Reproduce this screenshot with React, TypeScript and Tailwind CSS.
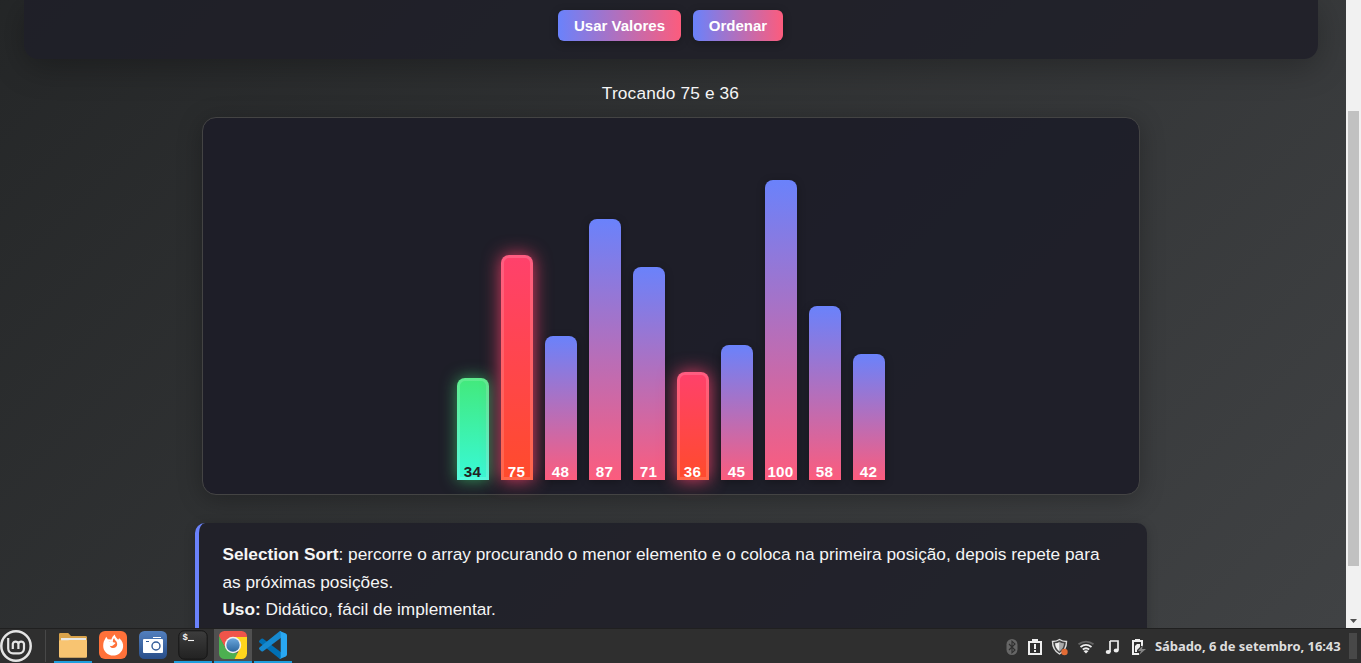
import React from "react";

type Kind = "normal" | "active" | "sorted";
const bars: { v: number; kind: Kind }[] = [
  { v: 34, kind: "sorted" },
  { v: 75, kind: "active" },
  { v: 48, kind: "normal" },
  { v: 87, kind: "normal" },
  { v: 71, kind: "normal" },
  { v: 36, kind: "active" },
  { v: 45, kind: "normal" },
  { v: 100, kind: "normal" },
  { v: 58, kind: "normal" },
  { v: 42, kind: "normal" },
];

const kinds: Record<Kind, string> = {
  normal: "bg-linear-to-b/srgb from-[#6a82fb] to-[#fc5c7d] text-white shadow-[0_2px_8px_rgba(0,0,0,0.3)]",
  active:
    "bg-linear-to-b/srgb from-[#ff416c] to-[#ff4b2b] text-white shadow-[0_0_18px_rgba(255,65,108,0.85),inset_0_0_0_3px_rgba(255,255,255,0.15)]",
  sorted:
    "bg-linear-to-b/srgb from-[#43e97b] to-[#38f9d7] text-[#222222] shadow-[0_0_16px_rgba(67,233,123,0.6),inset_0_0_0_3px_rgba(255,255,255,0.15)]",
};

function Bar({ v, kind }: { v: number; kind: Kind }) {
  return (
    <div
      className={`flex w-8 items-end justify-center rounded-t-lg pr-px text-[15.2px] leading-[16px] font-bold tracking-[0.3px] ${kinds[kind]}`}
      style={{ height: v * 3 }}
    >
      {v}
    </div>
  );
}

function GradientButton({ children, width }: { children: React.ReactNode; width: string }) {
  return (
    <button
      className={`h-[31px] rounded-md bg-linear-to-r/srgb from-[#6a82fb] to-[#fc5c7d] pl-px text-center text-[15.04px] leading-[31px] font-bold text-white shadow-[0_2px_8px_rgba(0,0,0,0.27)] ${width}`}
    >
      {children}
    </button>
  );
}

function MintLogo() {
  return (
    <svg width="32" height="32" viewBox="0 0 32 32" fill="none" stroke="#e4e4e4">
      <circle cx="16" cy="16" r="14.7" strokeWidth="2.5" />
      <path d="M8.2 8v10.500a4.800 4.800 0 0 0 4.800 4.800h6.200a4.800 4.800 0 0 0 4.800-4.800v-4.700a2.900 2.900 0 0 0-5.600 0V19m0-5.200a2.900 2.900 0 0 0-5.600 0V19" strokeWidth="2.2" />
    </svg>
  );
}

function FolderIcon() {
  return (
    <svg width="30" height="28" viewBox="0 0 30 28">
      <path d="M1 3.200Q1 2 2.200 2h8L13 5h14.500Q29 5 29 6.300V20H1z" fill="#d9a34b" />
      <path d="M3 7h25v4H3z" fill="#e8e8e6" />
      <path d="M1 10q0-.8 1.200-.8h7.500L12 9h16q1 0 1 1v15.500q0 1.300-1.300 1.300H2.300Q1 26.800 1 25.500z" fill="#f8c471" />
    </svg>
  );
}

function FirefoxIcon() {
  return (
    <svg width="30" height="30" viewBox="0 0 30 30">
      <rect x="1" y="1" width="28" height="28" rx="6" fill="#ff7139" />
      <path d="M5.800 11.500 8.200 6.800l1.600 2.400 3.600.3c.6-2.300 1.800-3.800 3.400-5 .2 2.200 1.700 3.700 3.400 5.200l1-1.400c2.900 2.300 4.300 5.300 3.900 8.600-.6 4.900-4.900 8.600-9.900 8.600-5.500 0-10-4.300-10-9.600 0-1.600.200-3 .6-4.400z" fill="#fff" />
      <path d="M10.500 11.500c2-.9 3.800-.5 4.700.8l2.300.4c-.4 1.500-1.800 1.900-2.700 2.700-1 1-2.300.6-3 .3.500 1.500 1.700 2.400 3.300 2.400 2.300 0 4.100-1.700 4.100-3.900 0-1-.3-1.900-.8-2.600-.8-1.100-2.200-2-2.100-3.500-1.200.8-1.600 2-1.300 3.300-1.100-.6-2.900-.8-4.500.1z" fill="#ff7139" />
    </svg>
  );
}

function CameraIcon() {
  return (
    <svg width="30" height="30" viewBox="0 0 30 30">
      <defs>
        <linearGradient id="camera" x1="0" y1="0" x2="0" y2="1">
          <stop stopColor="#527fbe" />
          <stop offset="1" stopColor="#294e89" />
        </linearGradient>
      </defs>
      <rect x="1" y="1" width="28" height="28" rx="5.5" fill="url(#camera)" />
      <path d="M15 7h8v1h-8zM6 9h18q1 0 1 1v12q0 1-1 1H6q-1 0-1-1V10q0-1 1-1z" fill="#fff" />
      <circle cx="18" cy="16" r="4" fill="#fff" stroke="#335c98" strokeWidth="1.4" />
      <path d="M8 11h3v1H8z" fill="#335c98" />
    </svg>
  );
}

function TerminalIcon() {
  return (
    <svg width="30" height="30" viewBox="0 0 30 30">
      <defs>
        <linearGradient id="term" x1="0" y1="0" x2="0" y2="1">
          <stop stopColor="#3d3d3d" />
          <stop offset="1" stopColor="#222" />
        </linearGradient>
      </defs>
      <rect x=".8" y=".8" width="28.4" height="28.4" rx="5.5" fill="url(#term)" stroke="#151515" />
      <text x="4.500" y="10" fill="#f4f4f4" fontFamily="Liberation Mono, monospace" fontSize="9" fontWeight="700">$</text>
      <path d="M10 10.500h6" stroke="#f4f4f4" strokeWidth="1.1" />
    </svg>
  );
}

function ChromeIcon() {
  return (
    <svg width="30" height="30" viewBox="0 0 30 30">
      <defs>
        <clipPath id="chromeTile"><rect x="1" y="1" width="28" height="28" rx="5.5" /></clipPath>
        <linearGradient id="chromeEye" x1="0" y1="0" x2="0" y2="1">
          <stop stopColor="#6aa6dc" />
          <stop offset="1" stopColor="#2d679f" />
        </linearGradient>
      </defs>
      <g clipPath="url(#chromeTile)">
        <path d="M0 0h30v8H15L8 19 0 5z" fill="#f0544a" />
        <path d="M0 4 8 19l7 4h5l-4 7H0z" fill="#4caf50" />
        <path d="M15 7h15v23H16l6-12z" fill="#ffd51d" />
      </g>
      <circle cx="15" cy="15" r="8.2" fill="#f1f1f1" />
      <circle cx="15" cy="15" r="6.7" fill="url(#chromeEye)" />
    </svg>
  );
}

function CodeIcon() {
  return (
    <svg width="30" height="30" viewBox="0 0 30 30">
      <path d="m1.4 10.6 2-1.9q.8-.6 1.7 0L23 22.3v6.5q-1 .4-2-.5L1.4 12.4q-.9-.9 0-1.8z" fill="#0070b5" />
      <path d="m1.4 19.4 2 1.9q.8.6 1.7 0L23 7.7V1.2q-1-.4-2 .5L1.4 17.6q-.9.9 0 1.8z" fill="#1689cf" />
      <path d="M21 1.8q.8-.8 2-.4l4.8 2.2q1.2.6 1.2 1.8v19.2q0 1.2-1.2 1.8L23 28.6q-1.2.5-2-.4 1.7 1.1 1.7-1.3V3q0-2.2-1.7-1.2z" fill="#29a7f2" />
    </svg>
  );
}

function Task({ children, open, current }: { children: React.ReactNode; open?: boolean; current?: boolean }) {
  return (
    <div className={`flex h-full w-[38px] flex-col items-center justify-between ${current ? "bg-[#505050]" : ""}`}>
      <div className="flex h-8 items-center">{children}</div>
      <div className={`h-0.5 w-full ${open ? "bg-[#1f9ede]" : ""}`} />
    </div>
  );
}

function Tray() {
  return (
    <div className="flex items-center pt-px">
      <svg className="mr-[7px]" width="16" height="18" viewBox="0 0 16 18">
        <rect x="2.5" y="1" width="11" height="16" rx="5.5" fill="#666" />
        <path d="m5 6 6 6-3 2.800V3.200L11 6l-6 6" fill="none" stroke="#2f2f2f" strokeWidth="1.1" />
      </svg>
      <svg className="mr-2" width="16" height="18" viewBox="0 0 16 18">
        <path d="M2 4h12v12H2z" fill="none" stroke="#eee" strokeWidth="2" />
        <path d="M5 1h6v3H5zM7 6h2v5H7zM7 12h2v2H7z" fill="#eee" />
      </svg>
      <svg className="mr-[9px]" width="17" height="18" viewBox="0 0 17 18">
        <path d="M8.500 1.500q3 2 7 2Q15.500 12 8.500 16 1.500 12 1.500 3.500q4 0 7-2z" fill="#444" stroke="#ddd" strokeWidth="1.4" />
        <path d="M8.500 4q2 1.200 4.500 1.300-.3 5.200-4.500 8.200z" fill="#aaa" />
        <path d="M8.500 4Q6.500 5.200 4 5.300q.3 5.200 4.500 8.200z" fill="#eee" />
        <circle cx="13.500" cy="14" r="3.200" fill="#e26b35" />
      </svg>
      <svg className="mr-[9px]" width="18" height="16" viewBox="0 0 18 16" fill="none" strokeWidth="1.8">
        <path d="M1.500 5.300q7.500-5.500 15 0" stroke="#666" />
        <path d="M3.500 8q5.500-4.300 11 0M5.800 10.500q3.200-2.600 6.400 0" stroke="#eee" />
        <path d="m9 14.500-2.500-2.400q2.500-1.800 5 0z" fill="#eee" />
      </svg>
      <svg className="mr-2.5" width="16" height="16" viewBox="0 0 16 16">
        <path d="M6 2h8v9M6 2v11" fill="none" stroke="#eee" strokeWidth="1.7" />
        <ellipse cx="4.200" cy="13" rx="2.500" ry="2" fill="#eee" />
        <ellipse cx="12.200" cy="11.500" rx="2.500" ry="2" fill="#eee" />
      </svg>
      <svg width="17" height="18" viewBox="0 0 17 18">
        <path d="M12 8V3H3v13h6" fill="none" stroke="#eee" strokeWidth="2" />
        <path d="M5 1h5v3H5zM5 8l2-2h3v3l-3 3v2H5z" fill="#eee" />
        <path d="m13 7-5 6h3l-2 4 7-6h-4z" fill="#858585" />
      </svg>
    </div>
  );
}

export default function App() {
  return (
    <div className="flex h-[663px] w-[1361px] flex-col overflow-hidden bg-[#2f2f2f] font-['Liberation_Sans',Arial,sans-serif]">
      <div className="flex h-[628px] overflow-hidden">
        <main className="flex h-full w-[1346px] flex-col items-center overflow-hidden bg-[linear-gradient(135deg,#232526,#414345)] bg-size-[1346px_820px] bg-position-[0_-130px] bg-no-repeat text-[#f5f5f5]">
          <section className="mr-1 flex h-[59px] w-[1294px] shrink-0 justify-center gap-3 rounded-b-[14px] bg-[rgba(30,30,40,0.85)] pt-2.5 pr-0.5 shadow-[0_8px_32px_rgba(0,0,0,0.27)]">
            <GradientButton width="w-[123px]">Usar Valores</GradientButton>
            <GradientButton width="w-[90px]">Ordenar</GradientButton>
          </section>
          <p className="mt-[23px] mr-[5px] h-[35px] shrink-0 text-[17.28px] leading-[22px] tracking-[0.16px]">Trocando 75 e 36</p>
          <section className="mr-1 flex h-[378px] w-[938px] shrink-0 items-end justify-center gap-3 rounded-[14px] border border-[#444444] bg-[rgba(30,30,40,0.95)] pb-3.5 shadow-[0_4px_24px_rgba(0,0,0,0.27)]">
            {bars.map((b) => (
              <Bar key={b.v} {...b} />
            ))}
          </section>
          <section className="mt-7 mr-1 h-[150px] w-[952px] shrink-0 rounded-[10px] border-l-4 border-[#6a82fb] bg-[rgba(30,30,40,0.85)] pt-[18px] pr-8 pl-[23.4px] text-[17.28px] leading-[27.65px] shadow-[0_2px_12px_rgba(0,0,0,0.2)]">
            <b>Selection Sort</b>: percorre o array procurando o menor elemento e o coloca na primeira posição, depois repete para as próximas posições.
            <br />
            <b>Uso:</b> Didático, fácil de implementar.
          </section>
        </main>
        <aside className="flex w-[15px] flex-col items-center bg-[#f1f1f1]">
          <div className="mt-[111px] h-[455px] w-[11px] bg-[#c1c1c1]" />
          <svg className="mt-[52px]" width="9" height="6" viewBox="0 0 9 6">
            <path d="M1 1h7L4.500 5z" fill="#505050" />
          </svg>
        </aside>
      </div>
      <footer className="flex h-[35px] items-center border-t border-[#202020] bg-[#2f2f2f]">
        <MintLogo />
        <div className="ml-[13px] h-8 w-px bg-[#484848]" />
        <nav className="ml-2 flex h-full gap-0.5">
          <Task open><FolderIcon /></Task>
          <Task><FirefoxIcon /></Task>
          <Task><CameraIcon /></Task>
          <Task open><TerminalIcon /></Task>
          <Task open current><ChromeIcon /></Task>
          <Task open><CodeIcon /></Task>
        </nav>
        <div className="ml-auto flex items-center">
          <Tray />
          <time className="ml-2 w-[186px] font-['Noto_Sans',sans-serif] text-[13px] leading-5 font-bold tracking-[-0.06px] whitespace-nowrap text-[#dedede]">
            Sábado, 6 de setembro, 16:43
          </time>
          <div className="ml-2 h-[26px] w-2 bg-[#484848]" />
          <div className="w-1" />
        </div>
      </footer>
    </div>
  );
}
